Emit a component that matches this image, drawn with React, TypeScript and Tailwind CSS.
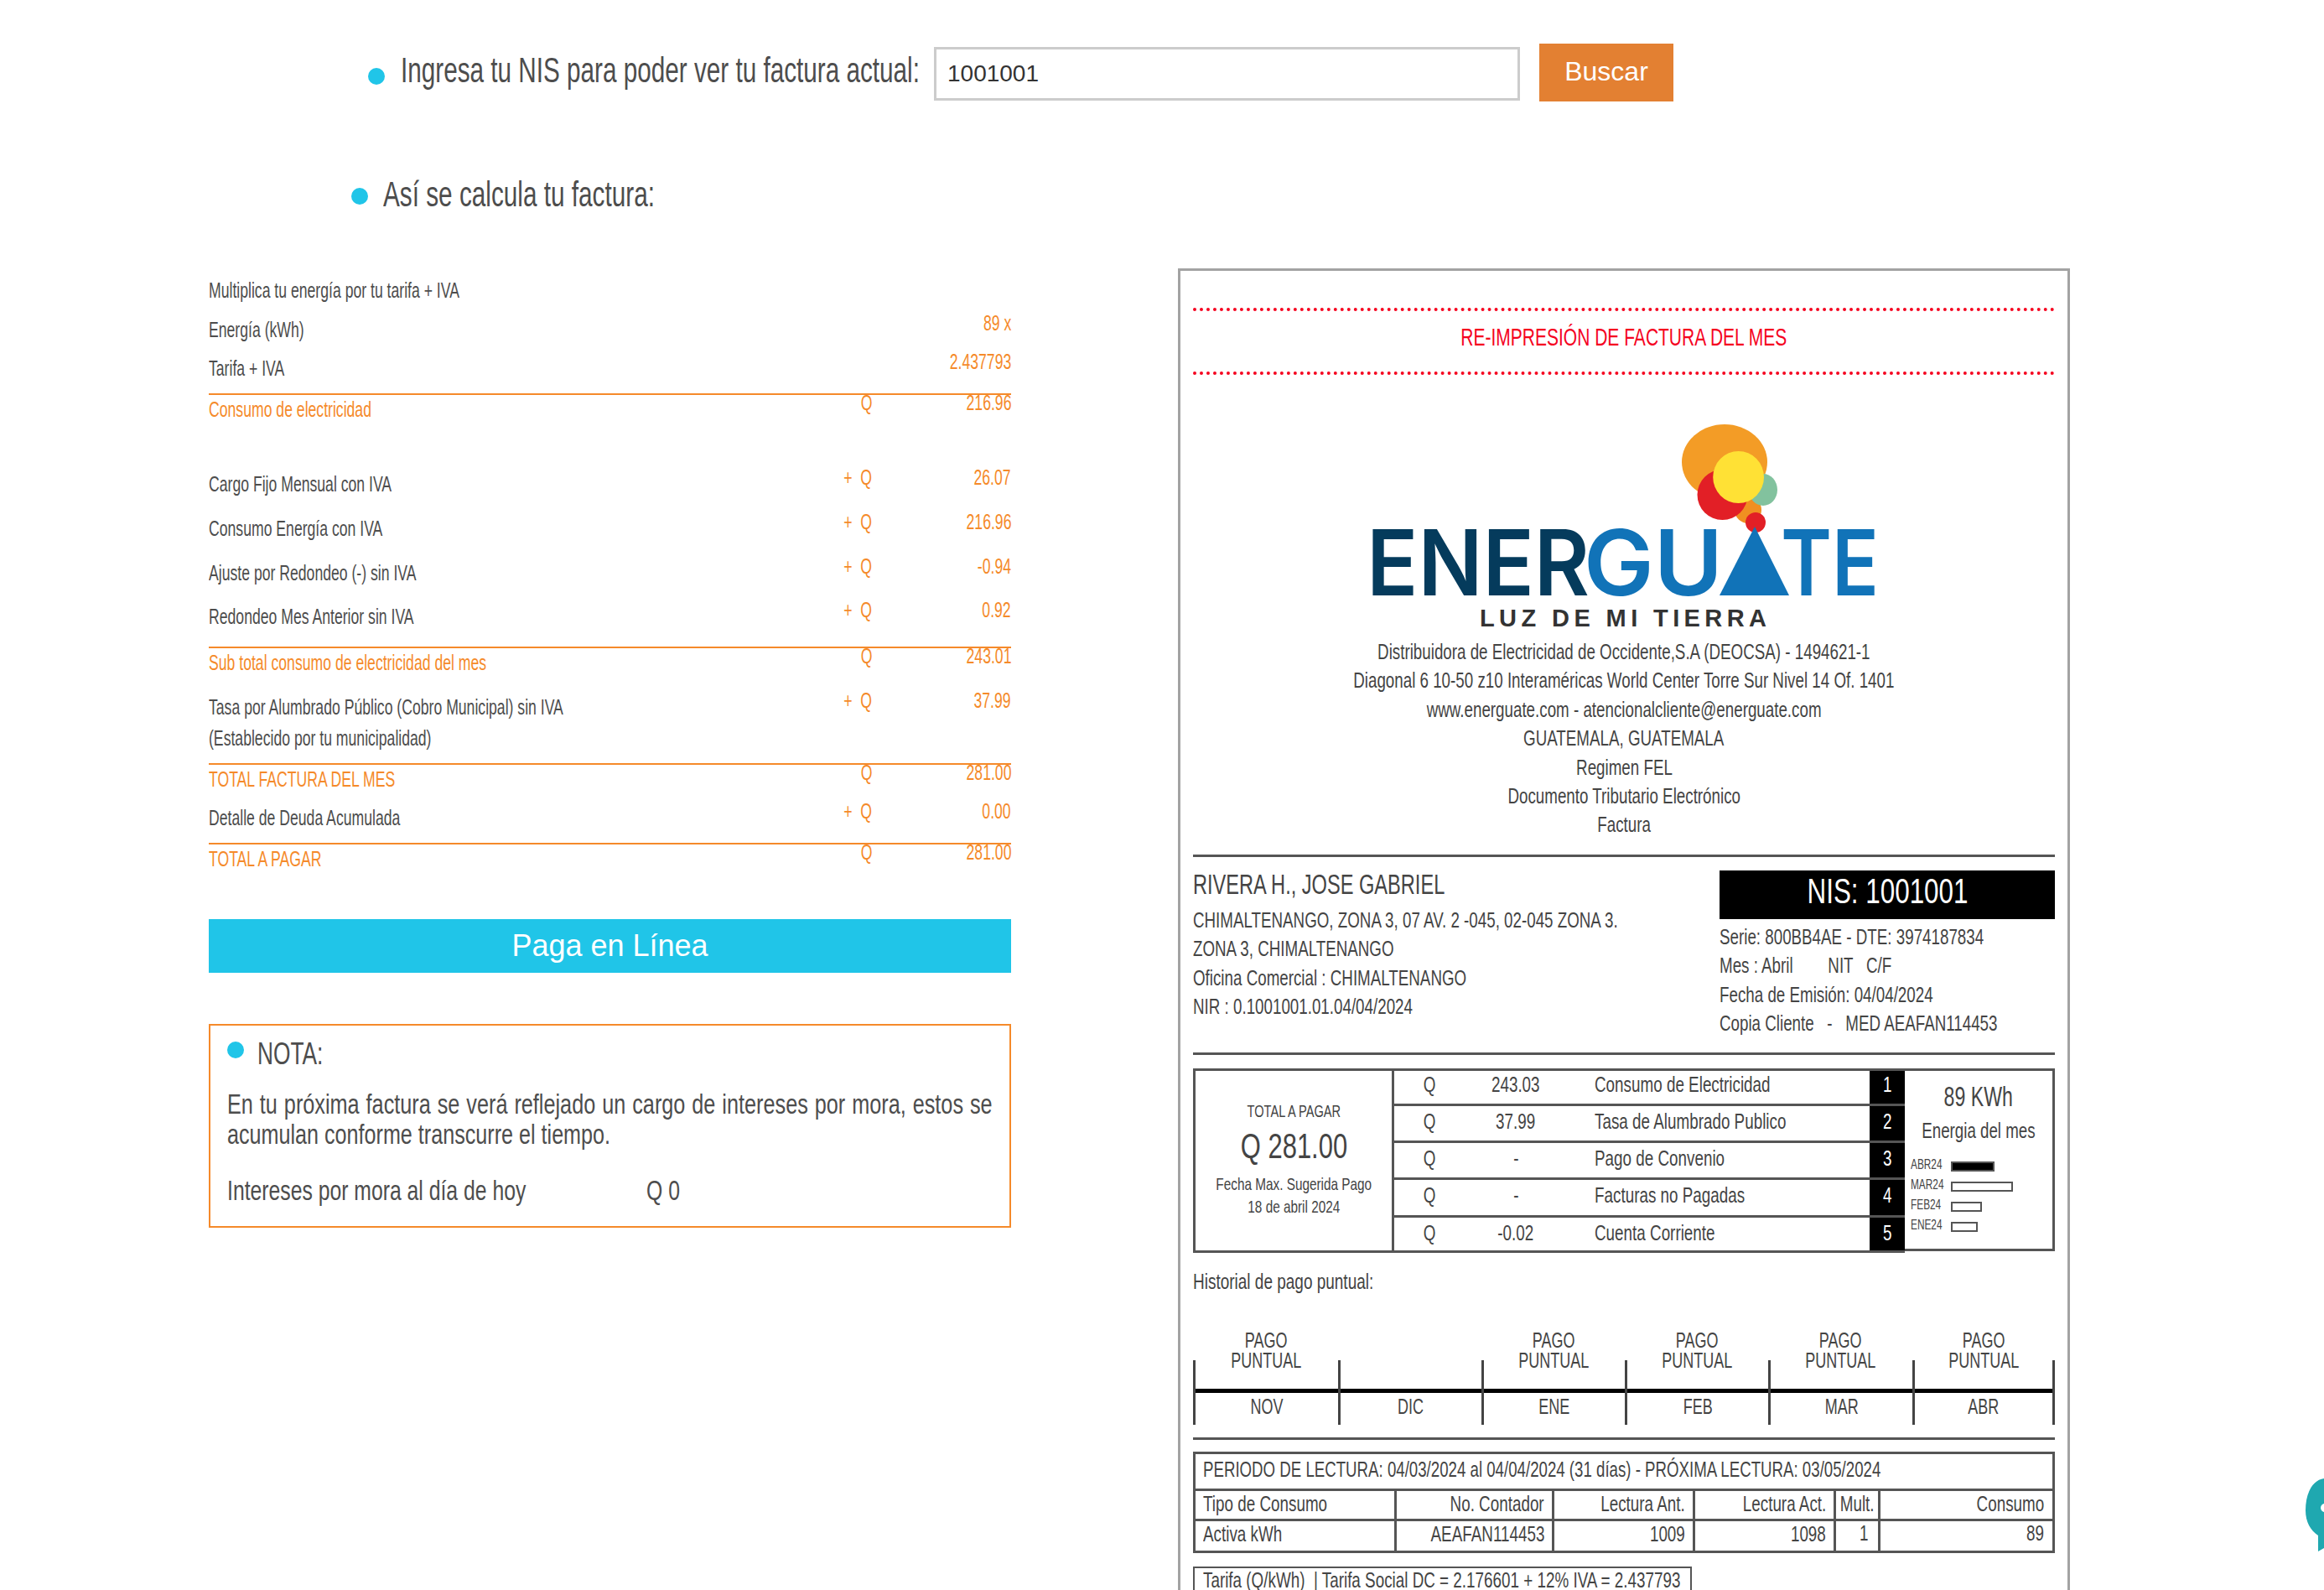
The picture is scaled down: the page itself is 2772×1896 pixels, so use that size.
import React from 'react';

type P = { cls: string; className?: string; children?: React.ReactNode };
const L = ({ cls, className = '', children }: P) => (
  <div className={`flex justify-start ${className}`}>
    <span className={`shrink-0 whitespace-pre origin-left ${cls}`}>{children}</span>
  </div>
);
const R = ({ cls, className = '', children }: P) => (
  <div className={`flex justify-end ${className}`}>
    <span className={`shrink-0 whitespace-pre origin-right ${cls}`}>{children}</span>
  </div>
);
const C = ({ cls, className = '', children }: P) => (
  <div className={`flex justify-center ${className}`}>
    <span className={`shrink-0 whitespace-pre origin-center ${cls}`}>{children}</span>
  </div>
);

const ROW = 'text-[25px] scale-x-[0.705] leading-[30px]';
const CARD = 'text-[26px] scale-x-[0.722] leading-[34.4px]';
const TBL = 'text-[26px] scale-x-[0.725]';
const GRAY = 'text-[#4d4d4d]';
const ORG = 'text-[#f58a2a]';
const LINE = 'border-t-2 border-[#f58a2a]';

const Bullet = ({ className = '' }: { className?: string }) => (
  <div className={`w-5 h-5 rounded-full bg-[#20c5e8] shrink-0 ${className}`} />
);

const Row = ({ label, q = '', v = '', orange = false, className = '' }: { label: string; q?: string; v?: string; orange?: boolean; className?: string }) => (
  <div className={`flex h-[38px] ${className}`}>
    <L cls={`${ROW} ${orange ? ORG : GRAY}`} className="flex-1 mt-2">{label}</L>
    {q ? <R cls={`${ROW} ${ORG}`} className="w-[60px]">{q}</R> : <div className="w-[60px]" />}
    {v ? <R cls={`${ROW} ${ORG}`} className="w-[166px]">{v}</R> : <div className="w-[166px]" />}
  </div>
);

const Logo = () => (
  <svg viewBox="0 0 680 270" className="w-[680px] h-[270px] ml-[177px] block shrink-0">
    <ellipse cx="457" cy="61" rx="51" ry="45" fill="#f39c26" />
    <circle cx="485" cy="118" r="16" fill="#f08f21" />
    <ellipse cx="503" cy="94" rx="17" ry="19" fill="#82c29e" />
    <ellipse cx="454.5" cy="100" rx="30" ry="30" fill="#e21f26" />
    <ellipse cx="473.6" cy="79" rx="30.4" ry="31" fill="#ffe135" />
    <circle cx="494" cy="133" r="12" fill="#e21f26" />
    <g fontFamily="Inter, 'Liberation Sans', sans-serif" fontWeight="600" fontSize="108">
      <text x="30" y="220" textLength="266" lengthAdjust="spacingAndGlyphs" fill="#053b5c">ENER</text>
      <text x="289" y="220" textLength="166" lengthAdjust="spacingAndGlyphs" fill="#1173b8">GU</text>
      <text x="524" y="220" textLength="117" lengthAdjust="spacingAndGlyphs" fill="#1173b8">TE</text>
    </g>
    <polygon points="493,138 534,220 451,220" fill="#1173b8" />
    <text x="165" y="257" textLength="342" fontFamily="'Liberation Sans', sans-serif" fontWeight="700" fontSize="29" fill="#333333">LUZ DE MI TIERRA</text>
  </svg>
);

const charges = [
  ['243.03', 'Consumo de Electricidad', 'h-[42px]'],
  ['37.99', 'Tasa de Alumbrado Publico', 'h-[44.3px]'],
  ['-', 'Pago de Convenio', 'h-[44.3px]'],
  ['-', 'Facturas no Pagadas', 'h-[44.3px]'],
  ['-0.02', 'Cuenta Corriente', 'h-[39px]'],
];

const bars = [
  ['ABR24', 'w-[52px] bg-black'],
  ['MAR24', 'w-[74px]'],
  ['FEB24', 'w-[37px]'],
  ['ENE24', 'w-[32px]'],
];

const months = [
  ['NOV', true, 'w-[173px]'],
  ['DIC', false, 'w-[171px]'],
  ['ENE', true, 'w-[171px]'],
  ['FEB', true, 'w-[171px]'],
  ['MAR', true, 'w-[172px]'],
  ['ABR', true, 'w-[170px]'],
] as const;

const TCell = ({ className = '', right = false, children }: { className?: string; right?: boolean; children: React.ReactNode }) =>
  right ? (
    <R cls={`${TBL} leading-[30px] text-[#444]`} className={`border-r-[3px] border-[#555] pr-[9px] ${className}`}>{children}</R>
  ) : (
    <L cls={`${TBL} leading-[30px] text-[#444]`} className={`border-r-[3px] border-[#555] pl-[9px] ${className}`}>{children}</L>
  );

export default function App() {
  return (
    <div className="relative w-[2772px] h-[1896px] overflow-hidden bg-white pt-[52px] font-['Liberation_Sans',Arial,sans-serif]">
      {/* NIS search */}
      <div className="flex items-start pl-[439px] h-[69px]">
        <Bullet className="mt-[29px]" />
        <L cls={`text-[42px] scale-x-[0.707] leading-[60px] ${GRAY}`} className="w-[636px] ml-[19px] mt-[2px]">Ingresa tu NIS para poder ver tu factura actual:</L>
        <input
          readOnly
          value="1001001"
          className="w-[699px] h-[64px] mt-[4px] border-[3px] border-[#cccccc] pl-[13px] text-[28px] text-[#333] bg-white outline-none"
        />
        <button className="w-[160px] h-[69px] ml-[23px] pb-[3px] bg-[#e38032] text-white text-[32px]">Buscar</button>
      </div>

      <div className="flex items-start pl-[419px] mt-[79px] h-[60px]">
        <Bullet className="mt-[24px]" />
        <L cls={`text-[42px] scale-x-[0.708] leading-[60px] ${GRAY}`} className="ml-[18px] mt-[2px]">Así se calcula tu factura:</L>
      </div>

      <div className="flex items-start mt-[60px] pl-[249px]">
        {/* Left column */}
        <div className="w-[957px] shrink-0">
          <Row label="Multiplica tu energía por tu tarifa + IVA" className="mt-[3px]" />
          <Row label="Energía (kWh)" v="89 x" className="mt-[9px]" />
          <Row label="Tarifa + IVA" v="2.437793" className="mt-2" />
          <div className={`${LINE} mt-[15px]`}>
            <Row label="Consumo de electricidad" q="Q" v="216.96" orange className="-mt-[6px]" />
          </div>
          <Row label="Cargo Fijo Mensual con IVA" q="+  Q" v="26.07" className="mt-[51px]" />
          <Row label="Consumo Energía con IVA" q="+  Q" v="216.96" className="mt-[15px]" />
          <Row label="Ajuste por Redondeo (-) sin IVA" q="+  Q" v="-0.94" className="mt-[15px]" />
          <Row label="Redondeo Mes Anterior sin IVA" q="+  Q" v="0.92" className="mt-[14px]" />
          <div className={`${LINE} mt-[21px]`}>
            <Row label="Sub total consumo de electricidad del mes" q="Q" v="243.01" orange className="-mt-[6px]" />
          </div>
          <Row label="Tasa por Alumbrado Público (Cobro Municipal) sin IVA" q="+  Q" v="37.99" className="mt-[15px]" />
          <L cls={`${ROW} ${GRAY}`} className="mt-[7px]">(Establecido por tu municipalidad)</L>
          <div className={`${LINE} mt-[15px]`}>
            <Row label="TOTAL FACTURA DEL MES" q="Q" v="281.00" orange className="-mt-[6px]" />
          </div>
          <Row label="Detalle de Deuda Acumulada" q="+  Q" v="0.00" className="mt-2" />
          <div className={`${LINE} mt-[15px]`}>
            <Row label="TOTAL A PAGAR" q="Q" v="281.00" orange className="-mt-[6px]" />
          </div>

          <button className="block w-full h-[64px] mt-[57px] bg-[#20c5e8] text-white text-[36px]">Paga en Línea</button>

          <div className="mt-[61px] h-[243px] border-2 border-[#f58a2a] pl-[20px] pt-[14px]">
            <div className="flex items-start">
              <Bullet className="mt-[5px]" />
              <L cls={`text-[36px] scale-x-[0.73] leading-[40px] ${GRAY}`} className="ml-4">NOTA:</L>
            </div>
            <div className={`mt-[22px] w-[1193px] origin-left scale-x-[0.765] text-[33px] leading-[36px] [text-align-last:justify] whitespace-nowrap ${GRAY}`}>
              En tu próxima factura se verá reflejado un cargo de intereses por mora, estos se
            </div>
            <L cls={`text-[33px] scale-x-[0.762] leading-[36px] ${GRAY}`}>acumulan conforme transcurre el tiempo.</L>
            <div className="flex mt-[31px]">
              <L cls={`text-[33px] scale-x-[0.75] leading-[36px] ${GRAY}`} className="w-[500px]">Intereses por mora al día de hoy</L>
              <L cls={`text-[33px] scale-x-[0.75] leading-[36px] ${GRAY}`}>Q 0</L>
            </div>
          </div>
        </div>

        {/* Invoice */}
        <div className="w-[1064px] ml-[199px] shrink-0 min-h-[1640px] border-[3px] border-[#a3a3a3] px-[15px] text-[#444]">
          <div className="mt-[44px] border-t-4 border-dotted border-[#f5031f]" />
          <C cls="text-[30px] scale-x-[0.7] leading-[40px] text-[#f5031f]" className="mt-[11px]">RE-IMPRESIÓN DE FACTURA DEL MES</C>
          <div className="mt-[21px] border-t-4 border-dotted border-[#f5031f]" />
          <div className="mt-[43px]"><Logo /></div>
          <div>
            {[
              'Distribuidora de Electricidad de Occidente,S.A (DEOCSA) - 1494621-1',
              'Diagonal 6 10-50 z10 Interaméricas World Center Torre Sur Nivel 14 Of. 1401',
              'www.energuate.com - atencionalcliente@energuate.com',
              'GUATEMALA, GUATEMALA',
              'Regimen FEL',
              'Documento Tributario Electrónico',
              'Factura',
            ].map((t) => (
              <C key={t} cls={CARD}>{t}</C>
            ))}
          </div>

          <div className="mt-[18px] h-[3px] bg-[#555]" />
          <div className="flex h-[233px]">
            <div className="w-[628px] shrink-0">
              <L cls="text-[33px] scale-x-[0.715] leading-[40px]" className="mt-[13px]">RIVERA H., JOSE GABRIEL</L>
              <L cls={CARD} className="mt-[5px]">CHIMALTENANGO, ZONA 3, 07 AV. 2 -045, 02-045 ZONA 3.</L>
              <L cls={CARD}>ZONA 3, CHIMALTENANGO</L>
              <L cls={CARD}>Oficina Comercial : CHIMALTENANGO</L>
              <L cls={CARD}>NIR : 0.1001001.01.04/04/2024</L>
            </div>
            <div className="w-[400px] shrink-0">
              <div className="mt-4 h-[58px] bg-black flex items-center justify-center pb-[10px]">
                <span className="text-[43px] scale-x-[0.73] text-white whitespace-pre">NIS: 1001001</span>
              </div>
              <L cls={CARD} className="mt-1">Serie: 800BB4AE - DTE: 3974187834</L>
              <L cls={CARD}>{'Mes : Abril        NIT   C/F'}</L>
              <L cls={CARD}>Fecha de Emisión: 04/04/2024</L>
              <L cls={CARD}>{'Copia Cliente   -   MED AEAFAN114453'}</L>
            </div>
          </div>
          <div className="h-[3px] bg-[#555]" />

          {/* Summary */}
          <div className="flex items-start mt-4 h-[220px]">
            <div className="w-[240px] h-[220px] shrink-0 border-[3px] border-[#555] pt-[33px]">
              <C cls="text-[20px] scale-x-[0.73] leading-[30px]">TOTAL A PAGAR</C>
              <C cls="text-[43px] scale-x-[0.72] leading-[50px]" className="mt-px">Q 281.00</C>
              <C cls="text-[21px] scale-x-[0.73] leading-[27px]" className="mt-[7px]">Fecha Max. Sugerida Pago</C>
              <C cls="text-[21px] scale-x-[0.73] leading-[27px]">18 de abril 2024</C>
            </div>
            <div className="w-[609px] shrink-0 h-[220px] border-y-[3px] border-[#555]">
              {charges.map(([v, d, h], i) => {
                const lh = i === 0 ? 'leading-[32px]' : 'leading-[36px]';
                return (
                  <div key={d} className={`flex ${h} ${i < 4 ? 'border-b-[3px] border-[#555]' : ''}`}>
                    <C cls={`${TBL} ${lh}`} className="w-[84px]">Q</C>
                    <C cls={`${TBL} ${lh}`} className="w-[122px]">{v}</C>
                    <L cls={`${TBL} ${lh}`} className="flex-1 ml-[33px]">{d}</L>
                    <C cls={`${TBL} ${lh} text-white`} className="w-[42px] bg-black">{i + 1}</C>
                  </div>
                );
              })}
            </div>
            <div className="w-[179px] shrink-0 h-[218px] border-y-[3px] border-r-[3px] border-[#555] pt-[11px] pl-[7px]">
              <C cls="text-[33px] scale-x-[0.7] leading-[40px]" className="pr-[7px]">89 KWh</C>
              <C cls="text-[26px] scale-x-[0.72] leading-[36px]" className="mt-[2px] pr-[7px]">Energia del mes</C>
              <div className="mt-[17px]">
                {bars.map(([m, w]) => (
                  <div key={m} className="flex h-6 items-start">
                    <L cls="text-[16px] scale-x-[0.74] leading-[12px]" className="w-[48px]">{m}</L>
                    <div className={`h-[12px] mt-[2px] border-2 border-[#555] ${w}`} />
                  </div>
                ))}
              </div>
            </div>
          </div>

          <L cls="text-[26px] scale-x-[0.73] leading-[34px]" className="mt-[17px]">Historial de pago puntual:</L>

          {/* History */}
          <div className="flex mt-[41px]">
            {months.map(([m, paid, w], i) => (
              <div key={m} className={`${w} shrink-0`}>
                <div className="h-6 pl-px">{paid && <C cls="text-[25px] scale-x-[0.72] leading-[24px]">PAGO</C>}</div>
                <div className="h-6 -mb-3 relative pl-px">{paid && <C cls="text-[25px] scale-x-[0.72] leading-[24px]">PUNTUAL</C>}</div>
                <div className={`h-[77px] pt-[34px] border-l-[3px] border-[#444] ${i === 5 ? 'border-r-[3px]' : ''}`}>
                  <div className="h-[5px] bg-black" />
                  <C cls="text-[25px] scale-x-[0.72] leading-[32px]">{m}</C>
                </div>
              </div>
            ))}
          </div>

          <div className="mt-[15px] h-[3px] bg-[#555]" />

          {/* Reading table */}
          <div className="mt-[14px] border-[3px] border-[#555]">
            <L cls="text-[26px] scale-x-[0.718] leading-[36px]" className="h-[44px] pl-[9px] border-b-[3px] border-[#555]">PERIODO DE LECTURA: 04/03/2024 al 04/04/2024 (31 días) - PRÓXIMA LECTURA: 03/05/2024</L>
            <div className="flex h-[36px] border-b-[3px] border-[#555]">
              <TCell className="w-[240px]">Tipo de Consumo</TCell>
              <TCell right className="w-[188px]">No. Contador</TCell>
              <TCell right className="w-[168px]">Lectura Ant.</TCell>
              <TCell right className="w-[168px]">Lectura Act.</TCell>
              <C cls={`${TBL} leading-[30px]`} className="w-[53px] border-r-[3px] border-[#555]">Mult.</C>
              <R cls={`${TBL} leading-[30px]`} className="flex-1 pr-[10px]">Consumo</R>
            </div>
            <div className="flex h-[35px]">
              <TCell className="w-[240px]">Activa kWh</TCell>
              <TCell right className="w-[188px]">AEAFAN114453</TCell>
              <TCell right className="w-[168px]">1009</TCell>
              <TCell right className="w-[168px]">1098</TCell>
              <R cls={`${TBL} leading-[28px]`} className="w-[53px] border-r-[3px] border-[#555] pr-[12px]">1</R>
              <R cls={`${TBL} leading-[28px]`} className="flex-1 pr-[10px]">89</R>
            </div>
          </div>

          <div className="mt-4 w-[595px] border-2 border-[#555] pl-[10px]">
            <L cls={`${TBL} leading-[28px]`}>{'Tarifa (Q/kWh)  | Tarifa Social DC = 2.176601 + 12% IVA = 2.437793'}</L>
          </div>
        </div>
      </div>

      {/* Chat bubble */}
      <svg viewBox="0 0 22 90" className="absolute right-0 top-[1761px] w-[22px] h-[90px]">
        <path d="M22 2 C8 4 0 20 0 40 C0 54 6 64 15 70 L15 89 L22 85 Z" fill="#1fa8b0" />
        <circle cx="23" cy="37" r="5" fill="#ffffff" />
      </svg>
    </div>
  );
}
